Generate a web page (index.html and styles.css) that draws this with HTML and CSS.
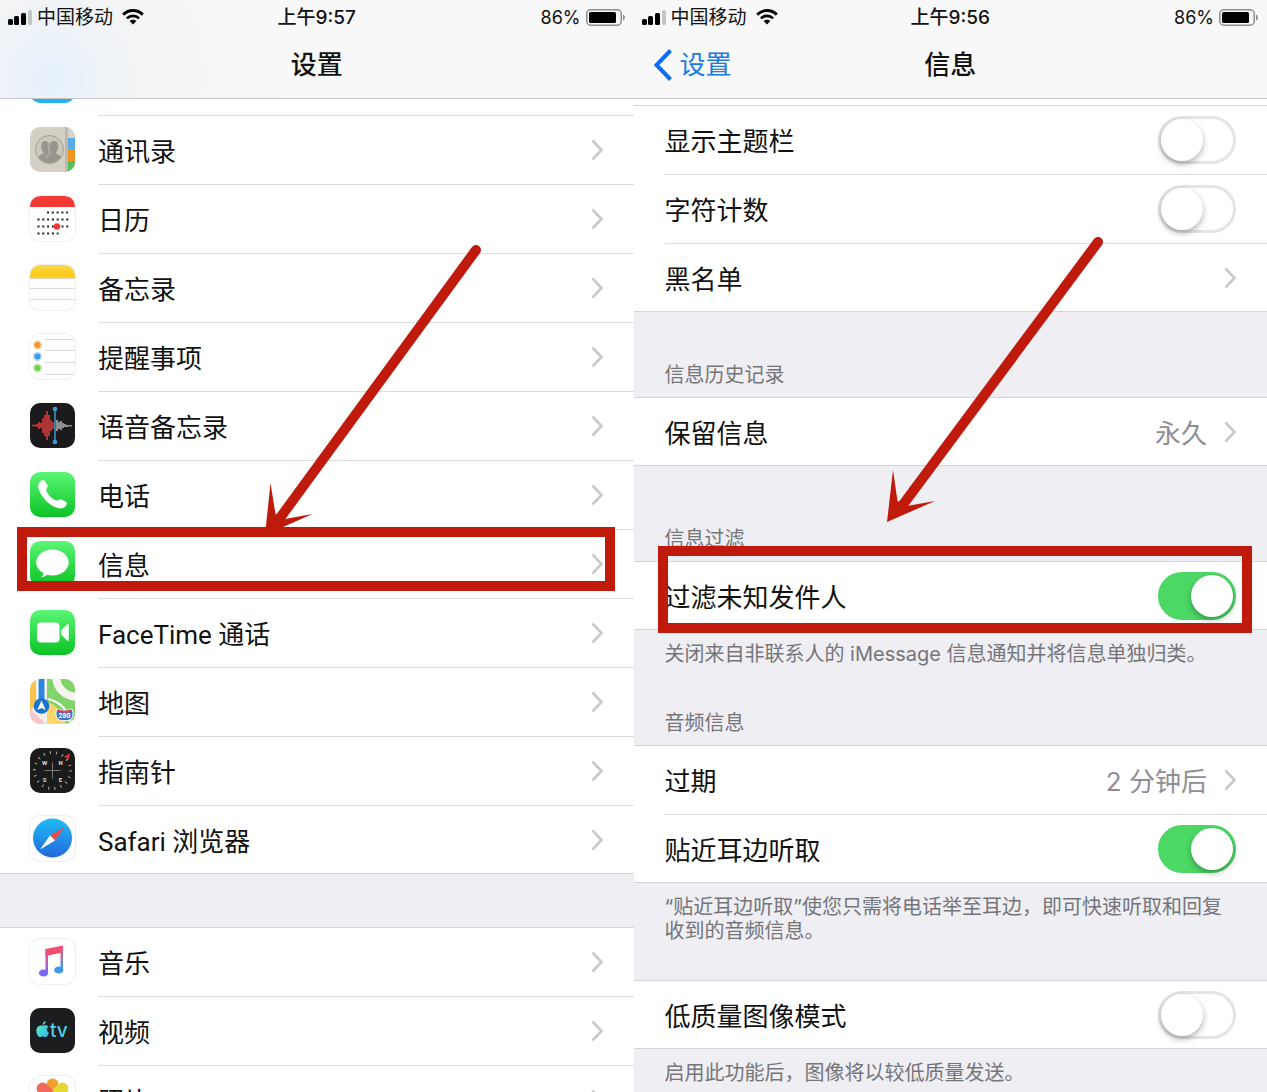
FILE: index.html
```html
<!DOCTYPE html>
<html lang="zh-CN">
<head>
<meta charset="utf-8">
<meta name="viewport" content="width=device-width, initial-scale=1">
<title>设置 - 信息</title>
<link rel="stylesheet" href="styles.css">
</head>
<body>
<svg class="defs" width="0" height="0" aria-hidden="true">
	<defs>
		<linearGradient id="green" x1="0" y1="0" x2="0" y2="1">
			<stop offset="0" stop-color="#5bf675"/>
			<stop offset="1" stop-color="#0bc325"/>
		</linearGradient>
		<linearGradient id="yellow" x1="0" y1="0" x2="0" y2="1">
			<stop offset="0" stop-color="#fbd84b"/>
			<stop offset="1" stop-color="#fac70f"/>
		</linearGradient>
		<linearGradient id="blue" x1="0" y1="0" x2="0" y2="1">
			<stop offset="0" stop-color="#1ebdf5"/>
			<stop offset="1" stop-color="#2467dd"/>
		</linearGradient>
		<linearGradient id="note" x1="0" y1="0" x2="0" y2="1">
			<stop offset="0" stop-color="#f2506c"/>
			<stop offset=".35" stop-color="#d9569d"/>
			<stop offset="1" stop-color="#7a68f3"/>
		</linearGradient>
		<linearGradient id="note2" x1="0" y1="0" x2="0" y2="1">
			<stop offset="0" stop-color="#f2506c"/>
			<stop offset="1" stop-color="#35a5ee"/>
		</linearGradient>
		<linearGradient id="tv" x1="0" y1="0" x2="1" y2="1">
			<stop offset="0" stop-color="#5ff0b8"/>
			<stop offset="1" stop-color="#31b7ee"/>
		</linearGradient>
		<clipPath id="tile"><rect width="45" height="45" rx="10"/></clipPath>
		<symbol id="chevron" viewBox="0 0 12 22">
			<path d="M1.5 1.5L10.5 11L1.5 20.5" fill="none" stroke="#c7c7cc" stroke-width="2.6"/>
		</symbol>
		<symbol id="signal" viewBox="0 0 24 15">
			<rect x="0" y="9" width="5" height="6" rx="1.5"/>
			<rect x="6" y="6" width="5" height="9" rx="1.5"/>
			<rect x="13" y="3" width="5" height="12" rx="1.5"/>
			<rect x="20" y="0" width="4" height="15" rx="1.5" fill="#c4c4c6"/>
		</symbol>
		<symbol id="wifi" viewBox="0 0 22 16">
			<path d="M1.2 5.6C6.8 .2 15.2 .2 20.8 5.6" fill="none" stroke="#000" stroke-width="2.9"/>
			<path d="M4.9 9.4C8.3 6.1 13.7 6.1 17.1 9.4" fill="none" stroke="#000" stroke-width="2.7"/>
			<path d="M11 15.4L7.6 12C9.4 10.3 12.6 10.3 14.4 12z"/>
		</symbol>
		<symbol id="battery" viewBox="0 0 40 17">
			<rect x=".75" y=".75" width="34.5" height="15.5" rx="4" fill="none" stroke="#8d8d8f" stroke-width="1.5"/>
			<rect x="3" y="3" width="27" height="11" rx="1.5"/>
			<path d="M37 5.5c2.6 .7 2.6 5.3 0 6z" fill="#8d8d8f"/>
		</symbol>
	</defs>
</svg>

<main class="screens">
	<section class="screen">
		<header class="navbar navbar-blue">
			<div class="status">
				<div class="carrier">
					<svg class="signal"><use href="#signal"/></svg>
					<span>中国移动</span>
					<svg class="wifi"><use href="#wifi"/></svg>
				</div>
				<time class="clock">上午9:57</time>
				<div class="power">
					<span>86%</span>
					<svg class="battery"><use href="#battery"/></svg>
				</div>
			</div>
			<div class="titlebar">
				<h1>设置</h1>
			</div>
		</header>

		<div class="peek">
			<div class="row">
				<svg class="icon" viewBox="0 0 45 45"><rect width="45" height="45" rx="10" fill="#1fb4ef"/></svg>
				<div class="cell"></div>
			</div>
		</div>
		<nav class="list apps">
			<a class="row" href="#contacts">
				<svg class="icon" viewBox="0 0 45 45">
					<g clip-path="url(#tile)">
						<rect width="45" height="45" fill="#d3cfc5"/>
						<rect x="35" width="3" height="45" fill="#bdb9ae"/>
						<rect x="38" width="7" height="11" fill="#d8d5cc"/>
						<rect x="38" y="11" width="7" height="12" fill="#56aeee"/>
						<rect x="38" y="23" width="7" height="11" fill="#f39322"/>
						<rect x="38" y="34" width="7" height="11" fill="#51c05a"/>
					</g>
					<circle cx="19.5" cy="22.5" r="14" fill="#cbc7bd" stroke="#a19e96"/>
					<path d="M8.500 30c1-2.500 5-2.500 5-4.500-3-3-3.500-11.500 1.500-11.500 3 0 4 2 4.500 4 .5-2 2-4 5-4 5 0 4.500 8.500 1.500 11.500 0 2 4 2 5 4.500-5 8-17.500 8-22.500 0z" fill="#98958e"/>
					<path d="M19.500 18c-1.500 3-.5 6 .5 8 0 2-3 2-4 5" fill="none" stroke="#cbc7bd"/>
				</svg>
				<div class="cell"><span>通讯录</span><svg class="chevron"><use href="#chevron"/></svg></div>
			</a>
			<a class="row" href="#calendar">
				<svg class="icon outlined" viewBox="0 0 45 45">
					<path d="M0 11C0 3 3 0 11 0h23c8 0 11 3 11 11z" fill="#f33a35"/>
					<g stroke="#222" stroke-width="2" stroke-dasharray="2 2.8">
						<path d="M17 16.5h21M7.5 23.5h31M7.5 30.5h31M7.5 37.5h21"/>
					</g>
					<circle cx="27" cy="30.5" r="3.2" fill="#f33a35"/>
				</svg>
				<div class="cell"><span>日历</span><svg class="chevron"><use href="#chevron"/></svg></div>
			</a>
			<a class="row" href="#notes">
				<svg class="icon outlined" viewBox="0 0 45 45">
					<path d="M0 12C0 3 3 0 11 0h23c8 0 11 3 11 12z" fill="url(#yellow)"/>
					<path d="M0 13h45" stroke="#d5cfc0" stroke-width="2"/>
					<path d="M0 23.5h45M0 34.5h45" stroke="#dcdcdf"/>
				</svg>
				<div class="cell"><span>备忘录</span><svg class="chevron"><use href="#chevron"/></svg></div>
			</a>
			<a class="row" href="#reminders">
				<svg class="icon outlined" viewBox="0 0 45 45">
					<path d="M15 5.5h30M15 16.5h30M15 28.5h30M15 40.5h30" stroke="#dadadd"/>
					<circle cx="7.5" cy="11" r="4.5" fill="#fbd3a2"/><circle cx="7.5" cy="11" r="3" fill="#f5952f"/>
					<circle cx="7.5" cy="22.5" r="4.5" fill="#b5dafa"/><circle cx="7.5" cy="22.5" r="3" fill="#3a9bee"/>
					<circle cx="7.5" cy="34" r="4.5" fill="#c5efb5"/><circle cx="7.5" cy="34" r="3" fill="#73d14c"/>
				</svg>
				<div class="cell"><span>提醒事项</span><svg class="chevron"><use href="#chevron"/></svg></div>
			</a>
			<a class="row" href="#voice-memos">
				<svg class="icon" viewBox="0 0 45 45">
					<rect width="45" height="45" rx="10" fill="#1b1b1d"/>
					<path d="M2 22.5h4M7 21v3M9 19v7M11 20v5M13 15v15M15 12v21M17 8v29M19 12v21M21 17v11M23 19v7" stroke="#c8393b" stroke-width="1.7"/>
					<path d="M27 17v11M29 19v7M31 18v9M33 20v5M35 21v3M37 22v2M39 22v1.5M41 22v1.5" stroke="#ddd" stroke-width="1.2"/>
					<path d="M25 6v33" stroke="#3c9ad0" stroke-width="1.5"/>
					<circle cx="25" cy="6" r="2.3" fill="#3c9ad0"/><circle cx="25" cy="39" r="2.3" fill="#3c9ad0"/>
				</svg>
				<div class="cell"><span>语音备忘录</span><svg class="chevron"><use href="#chevron"/></svg></div>
			</a>
			<a class="row" href="#phone">
				<svg class="icon" viewBox="0 0 45 45">
					<rect width="45" height="45" rx="10" fill="url(#green)"/>
					<path d="M10 9.5c2-2 4-2 5.2 0l2.2 3.8c1 2-1.8 3.6-1.2 5.200 1.5 4 5.8 8.300 9.800 10 1.800 .7 3-2 5.200-1.200l4.600 2.400c2 1.200 1 3.600-.8 5-2.600 2.200-6 2.200-9.500 .6C18 32 11.500 25 8.800 17.500c-1-3-.8-6 1.200-8z" fill="#fff"/>
				</svg>
				<div class="cell"><span>电话</span><svg class="chevron"><use href="#chevron"/></svg></div>
			</a>
			<div class="marked">
				<a class="row" href="#messages">
					<svg class="icon" viewBox="0 0 45 45">
						<rect width="45" height="45" rx="10" fill="url(#green)"/>
						<path d="M22.5 8.5c9 0 16.2 5.8 16.2 13s-7.2 13-16.2 13c-2 0-4-.3-5.6-.8-1.5 1.6-3.500 2.400-5.700 2.600 1.300-1.300 2.200-2.800 2.200-4.300-4.400-2.400-7.100-6-7.100-10.500 0-7.200 7.200-13 16.200-13z" fill="#fff"/>
					</svg>
					<div class="cell"><span>信息</span><svg class="chevron"><use href="#chevron"/></svg></div>
				</a>
				<svg class="arrow" viewBox="0 0 220 300">
					<path d="M213 11L14 283" stroke="#c01a0c" stroke-width="10" stroke-linecap="round"/>
					<path d="M7.5 244L12.5 275L22 280L49.5 275L2 296z" fill="#c01a0c"/>
				</svg>
				<div class="box"></div>
			</div>
			<a class="row" href="#facetime">
				<svg class="icon" viewBox="0 0 45 45">
					<rect width="45" height="45" rx="10" fill="url(#green)"/>
					<rect x="7" y="12.5" width="22.5" height="20" rx="4" fill="#fff"/>
					<path d="M31 20.5l6-6c.8-.8 1.7-.5 1.7 .8v14.4c0 1.3-.9 1.6-1.7 .8l-6-6z" fill="#fff"/>
				</svg>
				<div class="cell"><span>FaceTime 通话</span><svg class="chevron"><use href="#chevron"/></svg></div>
			</a>
			<a class="row" href="#maps">
				<svg class="icon" viewBox="0 0 45 45">
					<g clip-path="url(#tile)">
						<rect width="45" height="45" fill="#f3efe8"/>
						<path d="M0 0h6v26l-6 6z" fill="#fbc34d"/>
						<path d="M0 30l16 15H0z" fill="#f6c5cb"/>
						<path d="M17 0h28v45h-9L17 27z" fill="#83d36b"/>
						<path d="M17 23c8 2 13 8 19 22H17z" fill="#fbd66a"/>
						<path d="M26-2c1 12 9 19 21 20" fill="none" stroke="#f6f4ee" stroke-width="8"/>
						<path d="M18 20c13 3 20 11 24 27" fill="none" stroke="#fff" stroke-width="2"/>
						<rect x="7" width="9" height="25" fill="#fff"/>
						<rect x="8.5" width="6" height="22" fill="#2b86dd"/>
					</g>
					<circle cx="11.5" cy="27" r="7.8" fill="#1c74cd"/>
					<path d="M11.5 21.5l4.2 9.5-4.2-2-4.2 2z" fill="#fff"/>
					<path d="M27 30c5 2 10 2 15 0 2 5 1 9-2 11-4 1-8 1-11 0-3-3-4-6-2-11z" fill="#3a72c9" stroke="#fff"/>
					<path d="M28 31.5c4 1.5 9 1.5 13 0" fill="none" stroke="#d4474a" stroke-width="2"/>
					<text class="shield" x="34.5" y="39">280</text>
				</svg>
				<div class="cell"><span>地图</span><svg class="chevron"><use href="#chevron"/></svg></div>
			</a>
			<a class="row" href="#compass">
				<svg class="icon" viewBox="0 0 45 45">
					<rect width="45" height="45" rx="10" fill="#1b1b1c"/>
					<circle cx="22.5" cy="22.5" r="18" fill="none" stroke="#aaa" stroke-width="3" stroke-dasharray="1 5.28"/>
					<path d="M14.5 22.5h16M22.5 14.5v16" stroke="#777"/>
					<path d="M34 9l6-4-1 6z" fill="#e0343a"/>
					<g class="points">
						<text x="14.5" y="17">W</text><text x="30.5" y="17">N</text>
						<text x="14.5" y="34">S</text><text x="30.5" y="34">E</text>
					</g>
				</svg>
				<div class="cell"><span>指南针</span><svg class="chevron"><use href="#chevron"/></svg></div>
			</a>
			<a class="row last" href="#safari">
				<svg class="icon outlined" viewBox="0 0 45 45">
					<circle cx="22.5" cy="22" r="19.5" fill="url(#blue)"/>
					<path d="M34.5 11L20 19.5l5 5z" fill="#f24b43"/>
					<path d="M10 33.5l10-14 5 5z" fill="#fff"/>
				</svg>
				<div class="cell"><span>Safari 浏览器</span><svg class="chevron"><use href="#chevron"/></svg></div>
			</a>
		</nav>
		<nav class="list list-media">
			<a class="row" href="#music">
				<svg class="icon outlined" viewBox="0 0 45 45">
					<path d="M15.5 10l17.5-3.5v7l-17.5 3.5z" fill="#ee4f72"/>
					<rect x="15.5" y="10" width="2.5" height="24" fill="url(#note)"/>
					<rect x="30.5" y="8" width="2.5" height="23" fill="url(#note2)"/>
					<ellipse cx="13.5" cy="34" rx="4.6" ry="3.6" fill="#7a68f3"/>
					<ellipse cx="28.8" cy="31" rx="4.6" ry="3.6" fill="#3f98e8"/>
				</svg>
				<div class="cell"><span>音乐</span><svg class="chevron"><use href="#chevron"/></svg></div>
			</a>
			<a class="row" href="#video">
				<svg class="icon" viewBox="0 0 45 45">
					<rect width="45" height="45" rx="10" fill="#1d1d1f"/>
					<path d="M13.2 17.7c1.5-.8 4-.6 5.2 1-2.2 1.7-1.8 4.9 .6 6-.7 2.2-2.2 4.4-3.8 4.4-1.2 0-1.4-.6-2.6-.6s-1.6 .6-2.6 .6c-2 0-3.700-3.600-3.700-6.400 0-3.800 3.200-6.200 6.900-5zM12.600 16.800c0-2 1.300-3.500 3-3.800 .2 2-1.200 3.600-3 3.800z" fill="url(#tv)"/>
					<text class="tv" x="20" y="29">tv</text>
				</svg>
				<div class="cell"><span>视频</span><svg class="chevron"><use href="#chevron"/></svg></div>
			</a>
			<a class="row last" href="#photos">
				<svg class="icon outlined" viewBox="0 0 45 45">
					<g transform="translate(22.5 22.5)">
						<rect x="-6" y="-20" width="12" height="19" rx="6" fill="#f5a02b"/>
						<rect x="-6" y="-20" width="12" height="19" rx="6" fill="#e6d935" transform="rotate(45)"/>
						<rect x="-6" y="-20" width="12" height="19" rx="6" fill="#93cb57" transform="rotate(90)"/>
						<rect x="-6" y="-20" width="12" height="19" rx="6" fill="#5fbf98" transform="rotate(135)"/>
						<rect x="-6" y="-20" width="12" height="19" rx="6" fill="#6aa7dc" transform="rotate(180)"/>
						<rect x="-6" y="-20" width="12" height="19" rx="6" fill="#9a85c9" transform="rotate(225)"/>
						<rect x="-6" y="-20" width="12" height="19" rx="6" fill="#cf7fae" transform="rotate(270)"/>
						<rect x="-6" y="-20" width="12" height="19" rx="6" fill="#ee6a5a" transform="rotate(315)"/>
					</g>
				</svg>
				<div class="cell"><span>照片</span><svg class="chevron"><use href="#chevron"/></svg></div>
			</a>
		</nav>
	</section>

	<section class="screen">
		<header class="navbar">
			<div class="status">
				<div class="carrier">
					<svg class="signal"><use href="#signal"/></svg>
					<span>中国移动</span>
					<svg class="wifi"><use href="#wifi"/></svg>
				</div>
				<time class="clock">上午9:56</time>
				<div class="power">
					<span>86%</span>
					<svg class="battery"><use href="#battery"/></svg>
				</div>
			</div>
			<div class="titlebar">
				<a class="back" href="#settings">
					<svg viewBox="0 0 18 32"><path d="M16.5 1.5L2.5 16L16.5 30.5" fill="none" stroke="#0a6df5" stroke-width="4"/></svg>
					<span>设置</span>
				</a>
				<h1>信息</h1>
			</div>
		</header>

		<div class="peek peek-short"></div>
		<div class="list plain">
			<div class="row">
				<div class="cell"><label for="subject">显示主题栏</label><input class="switch" id="subject" type="checkbox"></div>
			</div>
			<div class="row">
				<div class="cell"><label for="count">字符计数</label><input class="switch" id="count" type="checkbox"></div>
			</div>
			<a class="row last" href="#blocked">
				<div class="cell"><span>黑名单</span><svg class="chevron"><use href="#chevron"/></svg></div>
			</a>
		</div>

		<h2 class="caption">信息历史记录</h2>
		<div class="list plain">
			<a class="row last" href="#keep">
				<div class="cell"><span>保留信息</span><span class="value">永久</span><svg class="chevron"><use href="#chevron"/></svg></div>
			</a>
		</div>

		<h2 class="caption caption-tall">信息过滤</h2>
		<div class="list plain marked">
			<div class="row last">
				<div class="cell"><label for="filter">过滤未知发件人</label><input class="switch" id="filter" type="checkbox" checked></div>
			</div>
			<svg class="arrow" viewBox="0 0 220 300">
				<path d="M213 10L14 278" stroke="#c01a0c" stroke-width="10"/>
				<circle cx="213" cy="10" r="5" fill="#c01a0c"/>
				<path d="M8 238L12.5 269L22 274L50 269L2 290z" fill="#c01a0c"/>
			</svg>
			<div class="box"></div>
		</div>
		<p class="footnote">关闭来自非联系人的 iMessage 信息通知并将信息单独归类。</p>

		<h2 class="caption caption-short">音频信息</h2>
		<div class="list plain">
			<a class="row" href="#expire">
				<div class="cell"><span>过期</span><span class="value">2 分钟后</span><svg class="chevron"><use href="#chevron"/></svg></div>
			</a>
			<div class="row last">
				<div class="cell"><label for="raise">贴近耳边听取</label><input class="switch" id="raise" type="checkbox" checked></div>
			</div>
		</div>
		<p class="footnote footnote-long">“贴近耳边听取”使您只需将电话举至耳边，即可快速听取和回复收到的音频信息。</p>

		<div class="list plain">
			<div class="row last">
				<div class="cell"><label for="lowres">低质量图像模式</label><input class="switch" id="lowres" type="checkbox"></div>
			</div>
		</div>
		<p class="footnote">启用此功能后，图像将以较低质量发送。</p>
	</section>
</main>
</body>
</html>
```
FILE: styles.css
```css
*{
	box-sizing: border-box;
	margin: 0;
	padding: 0;
}
body{
	background: #eeeef3;
	color: #111;
	font-family: Inter, "Noto Sans CJK SC", sans-serif;
	font-size: 26px;
	line-height: 36px;
}
a{
	color: inherit;
	text-decoration: none;
}
svg{
	display: block;
	flex: none;
}
.defs{
	position: absolute;
}
.screens{
	display: grid;
	grid-template-columns: 1fr 1fr;
	height: 100vh;
	overflow: hidden;
}
.screen{
	min-width: 0;
}

/* status bar and title */
.navbar{
	background: #f8f8f8;
	border-bottom: 1px solid #c6c6c8;
}
.navbar-blue{
	background: radial-gradient(circle at 8% 80%, #e6f1fa, #f3f4f5 16%, #f8f8f8 40%);
}
.status{
	align-items: center;
	display: grid;
	font-size: 19px;
	grid-template-columns: 1fr auto 1fr;
	height: 32px;
	line-height: 32px;
	padding: 0 8px;
}
.status span,
.clock{
	padding-top: 2px;
}
.carrier,
.power{
	align-items: center;
	display: flex;
	gap: 5px;
}
.power{
	font-size: 18px;
	justify-content: flex-end;
}
.clock{
	font-weight: 500;
}
.signal{
	height: 15px;
	width: 24px;
}
.wifi{
	height: 16px;
	margin-left: 4px;
	width: 22px;
}
.battery{
	height: 17px;
	width: 40px;
}
.titlebar{
	align-items: center;
	display: grid;
	grid-template-columns: 1fr auto 1fr;
	height: 66px;
	padding: 0 20px;
}
h1{
	font-size: 26px;
	font-weight: 500;
	grid-column: 2;
}
.back{
	align-items: center;
	color: #1a7be0;
	display: flex;
	gap: 8px;
}
.back svg{
	height: 32px;
	width: 18px;
}

/* lists */
.peek{
	align-items: flex-end;
	background: #fff;
	display: flex;
	height: 17px;
	overflow: hidden;
}
.peek .row{
	flex: 1;
}
.peek-short{
	border-bottom: 1px solid #d9d9dc;
	height: 7px;
}
.list{
	background: #fff;
	border-bottom: 1px solid #d4d4d8;
}
.apps{
	font-family: Roboto, "Noto Sans CJK SC", sans-serif;
}
.list-media{
	border-top: 1px solid #d4d4d8;
	margin-top: 53px;
}
.row{
	align-items: center;
	display: flex;
	gap: 23px;
	height: 69px;
	padding-left: 30px;
}
.plain .row{
	padding-left: 31px;
}
.row.last{
	height: 67px;
}
.icon{
	height: 45px;
	margin-bottom: 3px;
	width: 45px;
}
.outlined{
	border-radius: 10px;
	box-shadow: 0 0 0 1px #f0f0f1;
}
.cell{
	align-items: center;
	border-bottom: 1px solid #dcdcdf;
	display: flex;
	flex: 1;
	gap: 17px;
	height: 100%;
	padding-right: 31px;
}
.last .cell{
	border-bottom: 0;
}
.cell > span,
.cell > label{
	padding-top: 4px;
}
.cell > :first-child{
	flex: 1;
}
.value{
	color: #8e8e93;
}
.chevron{
	height: 22px;
	width: 12px;
}
.shield{
	fill: #fff;
	font-size: 7px;
	font-weight: 700;
	text-anchor: middle;
}
.points{
	fill: #ddd;
	font-size: 6px;
	font-weight: 700;
	text-anchor: middle;
}
.tv{
	fill: #4fd0e0;
	font-size: 19px;
	font-weight: 500;
}

/* group captions and notes */
.caption,
.footnote{
	color: #75757a;
	font-size: 20px;
	font-weight: 400;
	line-height: 24px;
	padding: 0 31px;
}
.caption{
	border-bottom: 1px solid #d4d4d8;
	padding-bottom: 10px;
	padding-top: 51px;
}
.caption-tall{
	padding-top: 61px;
}
.caption-short{
	padding-top: 34px;
}
.footnote{
	padding-top: 12px;
	padding-bottom: 11px;
}
.footnote-long{
	border-bottom: 1px solid #d4d4d8;
	padding-bottom: 37px;
}

/* switches */
.switch{
	-webkit-appearance: none;
	appearance: none;
	background: #fff;
	border: 3px solid #e4e4e5;
	border-radius: 24px;
	cursor: pointer;
	flex: none;
	height: 48px;
	width: 78px;
}
.switch::before{
	background: #fff;
	border-radius: 50%;
	box-shadow: 0 3px 6px rgba(0,0,0,.3);
	content: "";
	display: block;
	height: 42px;
	width: 42px;
}
.switch:checked{
	background: #4cd864;
	border-color: #4cd864;
}
.switch:checked::before{
	margin-left: 30px;
}

/* red marker over the row to tap */
.marked{
	position: relative;
}
.box{
	border: 10px solid #c01a0c;
	bottom: 8px;
	left: 17px;
	pointer-events: none;
	position: absolute;
	right: 19px;
	top: -3px;
}
.plain .box{
	bottom: -4px;
	left: 24px;
	right: 15px;
	top: -16px;
}
.arrow{
	bottom: 60px;
	height: 300px;
	pointer-events: none;
	position: absolute;
	right: 151px;
	width: 220px;
}
.plain .arrow{
	bottom: 97px;
	right: 162px;
}
```
